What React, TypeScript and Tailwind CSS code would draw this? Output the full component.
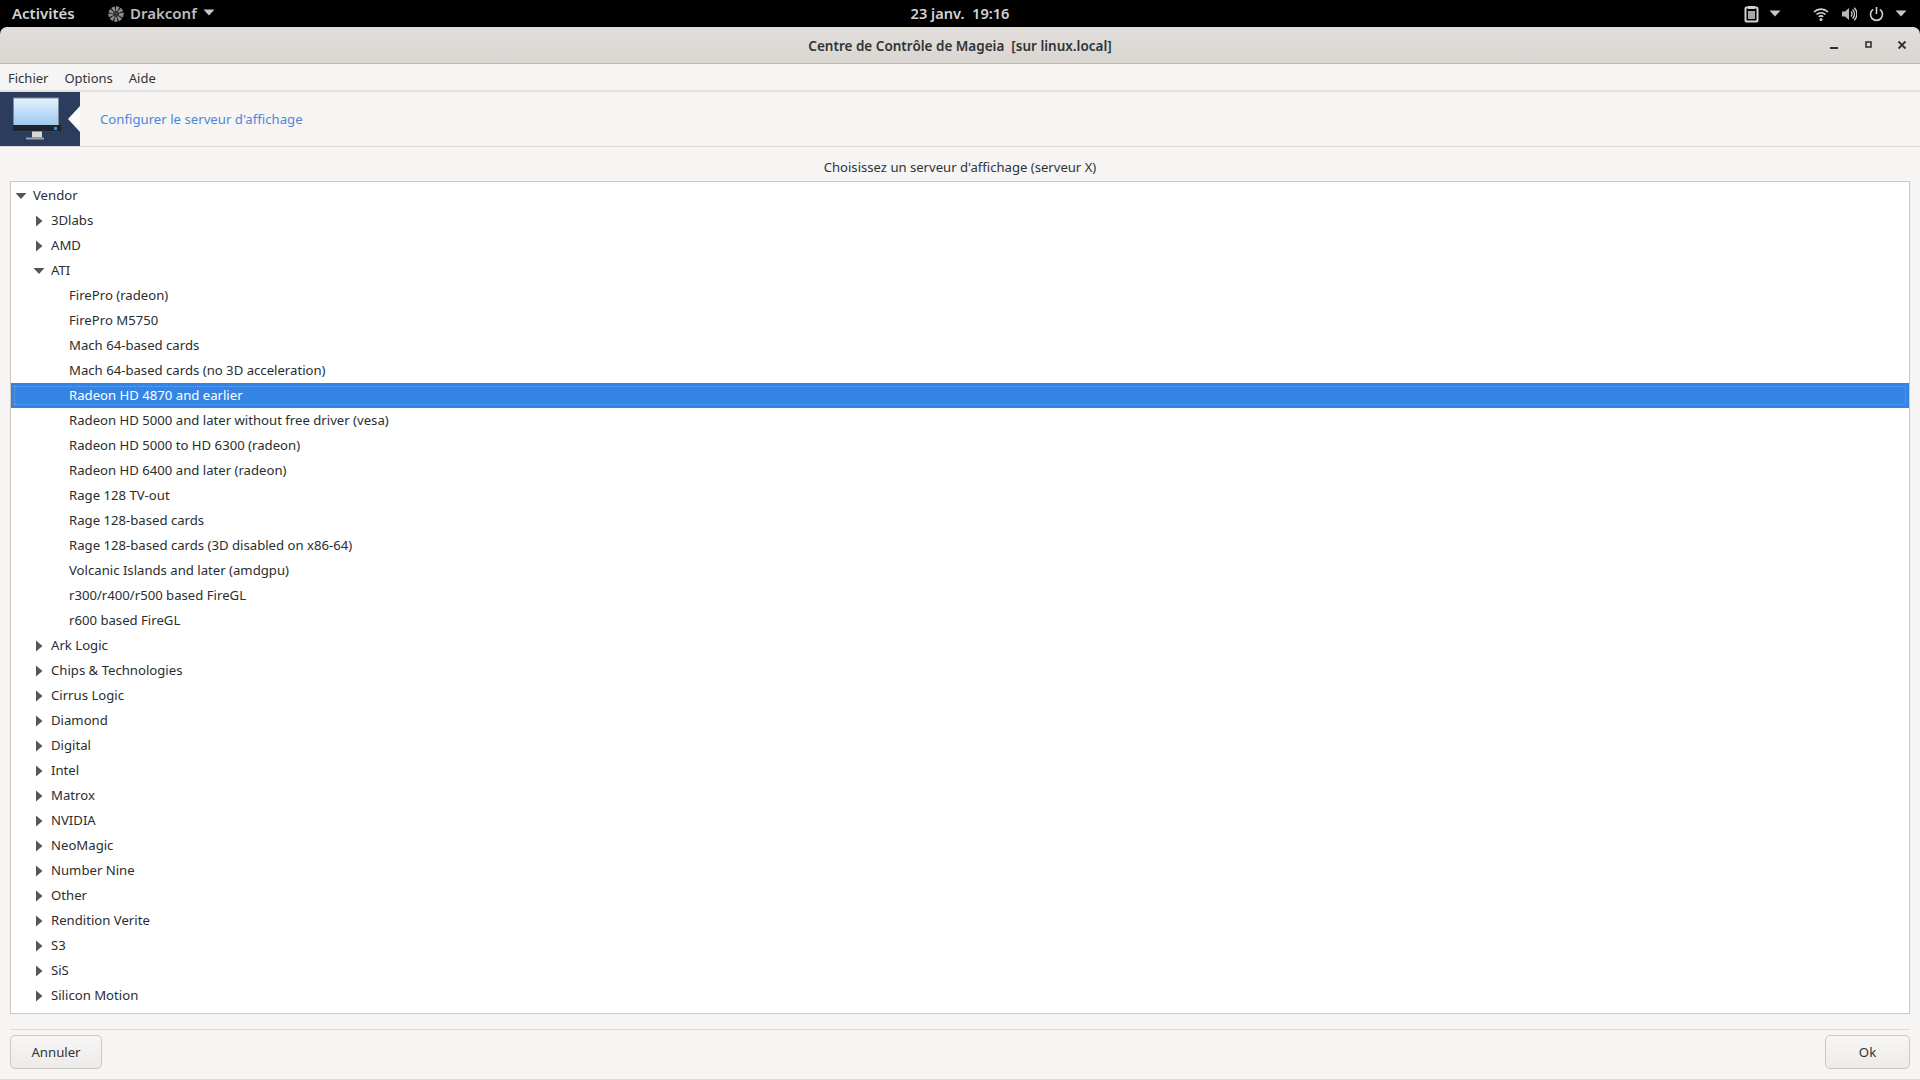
import React from "react";

type Row = { t: string; d: 0 | 1 | 2; a?: "r" | "d"; s?: boolean };

const rows: Row[] = [
  { t: "Vendor", d: 0, a: "d" },
  { t: "3Dlabs", d: 1, a: "r" },
  { t: "AMD", d: 1, a: "r" },
  { t: "ATI", d: 1, a: "d" },
  { t: "FirePro (radeon)", d: 2 },
  { t: "FirePro M5750", d: 2 },
  { t: "Mach 64-based cards", d: 2 },
  { t: "Mach 64-based cards (no 3D acceleration)", d: 2 },
  { t: "Radeon HD 4870 and earlier", d: 2, s: true },
  { t: "Radeon HD 5000 and later without free driver (vesa)", d: 2 },
  { t: "Radeon HD 5000 to HD 6300 (radeon)", d: 2 },
  { t: "Radeon HD 6400 and later (radeon)", d: 2 },
  { t: "Rage 128 TV-out", d: 2 },
  { t: "Rage 128-based cards", d: 2 },
  { t: "Rage 128-based cards (3D disabled on x86-64)", d: 2 },
  { t: "Volcanic Islands and later (amdgpu)", d: 2 },
  { t: "r300/r400/r500 based FireGL", d: 2 },
  { t: "r600 based FireGL", d: 2 },
  { t: "Ark Logic", d: 1, a: "r" },
  { t: "Chips & Technologies", d: 1, a: "r" },
  { t: "Cirrus Logic", d: 1, a: "r" },
  { t: "Diamond", d: 1, a: "r" },
  { t: "Digital", d: 1, a: "r" },
  { t: "Intel", d: 1, a: "r" },
  { t: "Matrox", d: 1, a: "r" },
  { t: "NVIDIA", d: 1, a: "r" },
  { t: "NeoMagic", d: 1, a: "r" },
  { t: "Number Nine", d: 1, a: "r" },
  { t: "Other", d: 1, a: "r" },
  { t: "Rendition Verite", d: 1, a: "r" },
  { t: "S3", d: 1, a: "r" },
  { t: "SiS", d: 1, a: "r" },
  { t: "Silicon Motion", d: 1, a: "r" },
];

function Arrow({ a }: { a: "r" | "d" }) {
  return (
    <svg width="12" height="12" viewBox="0 0 12 12" className="shrink-0">
      {a === "r" ? <path d="M3 0.5 L9.5 6 L3 11.5 Z" fill="#555753" /> : <path d="M0.5 3 L11.5 3 L6 9 Z" fill="#555753" />}
    </svg>
  );
}

function Caret({ color = "#c8c8c8" }: { color?: string }) {
  return (
    <svg width="12" height="7" viewBox="0 0 12 7" className="block">
      <path d="M0.5 0.5 L11.5 0.5 L6 6.5 Z" fill={color} />
    </svg>
  );
}

function TreeRow({ r }: { r: Row }) {
  const pad = r.d === 0 ? "pl-[4px]" : r.d === 1 ? "pl-[22px]" : "pl-[58px]";
  return (
    <div className={`h-[25px] flex items-center text-[13.15px] ${pad} ${r.s ? "bg-[#3584e4] text-white relative" : "text-[#2a2e30]"}`}>
      {r.s && <div className="absolute inset-[3px] border border-dotted border-[#6ea4ea]" />}
      {r.a && (
        <span className="w-[18px] shrink-0 flex">
          <Arrow a={r.a} />
        </span>
      )}
      <span className="whitespace-nowrap relative">{r.t}</span>
    </div>
  );
}

function TopBar() {
  return (
    <div className="h-[27px] bg-black flex items-center justify-between text-[#d3d3d3] text-[15px] font-semibold relative shrink-0">
      <div className="flex items-center">
        <span className="ml-[12px] w-[62px] whitespace-nowrap">Activités</span>
        <svg width="16" height="16" viewBox="0 0 16 16" className="ml-[34px]">
          <circle cx="8" cy="8" r="5.2" fill="none" stroke="#8a8a8a" strokeWidth="5" strokeDasharray="2.6 0.8" />
          <circle cx="8" cy="8" r="2.4" fill="#3a3a3a" />
        </svg>
        <span className="ml-[6px] w-[68px] text-[#bdbdbd] whitespace-nowrap">Drakconf</span>
        <span className="ml-[5px] flex mb-[2px]"><Caret /></span>
      </div>
      <div className="absolute inset-x-0 top-0 h-[27px] flex items-center justify-center pointer-events-none">
        <span className="text-[14.6px]">23 janv.&nbsp;&nbsp;19:16</span>
      </div>
      <div className="flex items-center mr-[13px]">
        <svg width="15" height="18" viewBox="0 0 15 18">
          <rect x="1.5" y="2.5" width="12" height="14" rx="1" fill="none" stroke="#d3d3d3" strokeWidth="2" />
          <rect x="4" y="1" width="7" height="3" fill="#d3d3d3" />
          <rect x="4" y="6" width="7" height="8" fill="#a8a8a8" />
        </svg>
        <span className="ml-[10px] flex"><Caret /></span>
        <svg width="16" height="14" viewBox="0 0 16 14" className="ml-[32px]">
          <path d="M1 5 A10 10 0 0 1 15 5" fill="none" stroke="#d3d3d3" strokeWidth="1.6" />
          <path d="M3.5 7.5 A6.5 6.5 0 0 1 12.5 7.5" fill="none" stroke="#d3d3d3" strokeWidth="1.6" />
          <path d="M5.8 9.8 A3 3 0 0 1 10.2 9.8" fill="none" stroke="#d3d3d3" strokeWidth="1.6" />
          <circle cx="8" cy="12.5" r="1.5" fill="#d3d3d3" />
        </svg>
        <svg width="16" height="14" viewBox="0 0 16 14" className="ml-[12px]">
          <path d="M1 4.5 H4 L8 1 V13 L4 9.5 H1 Z" fill="#b8b8b8" />
          <path d="M10 4.5 A3.5 3.5 0 0 1 10 9.5" fill="none" stroke="#d3d3d3" strokeWidth="1.3" />
          <path d="M11.5 2.5 A6 6 0 0 1 11.5 11.5" fill="none" stroke="#d3d3d3" strokeWidth="1.3" />
          <path d="M13.2 0.8 A8.5 8.5 0 0 1 13.2 13.2" fill="none" stroke="#d3d3d3" strokeWidth="1.3" />
        </svg>
        <svg width="15" height="16" viewBox="0 0 15 16" className="ml-[12px]">
          <path d="M4.2 3.4 A6 6 0 1 0 10.8 3.4" fill="none" stroke="#d3d3d3" strokeWidth="1.6" />
          <path d="M7.5 1 V8" fill="none" stroke="#d3d3d3" strokeWidth="1.6" />
        </svg>
        <span className="ml-[11px] flex"><Caret /></span>
      </div>
    </div>
  );
}

function TitleBar() {
  return (
    <div className="h-[37px] shrink-0 bg-black">
      <div className="h-full rounded-t-[7px] bg-gradient-to-b from-[#e1dedb] to-[#dad6d2] border-b border-[#bfb8b1] flex items-center relative">
        <div className="flex-1 text-center text-[13.5px] font-semibold text-[#2e3436] whitespace-pre pt-[2px]">Centre de Contrôle de Mageia  [sur linux.local]</div>
        <div className="absolute right-0 top-0 bottom-0 flex items-center">
          <svg width="10" height="10" viewBox="0 0 10 10" className="mr-[26px]">
            <rect x="1" y="7" width="8" height="2" fill="#2e3436" />
          </svg>
          <svg width="8" height="8" viewBox="0 0 8 8" className="mr-[24px]">
            <rect x="1" y="1" width="5" height="5" fill="none" stroke="#2e3436" strokeWidth="1.6" />
          </svg>
          <svg width="10" height="10" viewBox="0 0 10 10" className="mr-[13px]">
            <path d="M1.5 1.5 L8.5 8.5 M8.5 1.5 L1.5 8.5" stroke="#2e3436" strokeWidth="1.8" />
          </svg>
        </div>
      </div>
    </div>
  );
}

function MonitorIcon() {
  return (
    <svg width="50" height="44" viewBox="0 0 50 44" className="block">
      <defs>
        <linearGradient id="scr" x1="0" y1="0" x2="0" y2="1">
          <stop offset="0" stopColor="#e3f2fe" />
          <stop offset="1" stopColor="#9cc9ef" />
        </linearGradient>
      </defs>
      <rect x="2" y="0.5" width="46" height="34" fill="#7f8a97" />
      <rect x="3" y="1.5" width="44" height="27" fill="url(#scr)" />
      <rect x="2" y="28" width="48" height="6.5" fill="#20242b" />
      <rect x="43" y="30" width="3" height="3" fill="#1f9bdc" />
      <rect x="21" y="34.5" width="10" height="6" fill="#d5d9dc" />
      <rect x="15" y="40.5" width="18" height="2" fill="#9aa3ab" />
    </svg>
  );
}

export default function App() {
  return (
    <div className="w-[1920px] h-[1080px] overflow-hidden flex flex-col bg-[#f6f5f4] font-['Noto_Sans',sans-serif]">
      <TopBar />
      <TitleBar />
      <div className="h-[26px] shrink-0 flex items-center text-[13px] text-[#2e3436] pl-[8px] pt-[3px] gap-[16px]">
        <span>Fichier</span>
        <span>Options</span>
        <span>Aide</span>
      </div>
      <div className="h-[2px] shrink-0 bg-[#e3e0dd]" />
      <div className="h-[55px] shrink-0 flex items-center border-b border-[#dfdcd8]">
        <div className="w-[80px] h-full bg-[#2c3c5c] relative shrink-0 flex items-center pl-[11px]">
          <MonitorIcon />
          <div className="absolute right-0 top-1/2 -translate-y-1/2 w-0 h-0 border-y-[13px] border-y-transparent border-r-[12px] border-r-[#fbfbfa]" />
        </div>
        <span className="ml-[20px] pt-[2px] text-[13.2px] text-[#4f86d8]">Configurer le serveur d'affichage</span>
      </div>
      <div className="h-[34px] shrink-0 flex items-center justify-center pt-[7px] text-[13.1px] text-[#2e3436]">Choisissez un serveur d'affichage (serveur X)</div>
      <div className="mx-[10px] h-[833px] shrink-0 bg-white border border-[#cdc7c2] overflow-hidden pt-[1px]">
        {rows.map((r) => (
          <TreeRow key={r.t} r={r} />
        ))}
      </div>
      <div className="mx-[10px] mt-[15px] h-px shrink-0 bg-[#dfdcd8]" />
      <div className="mx-[10px] mt-[5px] flex justify-between shrink-0">
        <button className="w-[92px] h-[34px] pt-[2px] rounded-[5px] border border-[#cdc7c2] bg-gradient-to-b from-[#f8f7f6] to-[#edebe9] text-[13.2px] text-[#2e3436]">Annuler</button>
        <button className="w-[85px] h-[34px] pt-[2px] rounded-[5px] border border-[#cdc7c2] bg-gradient-to-b from-[#f8f7f6] to-[#edebe9] text-[13.2px] text-[#2e3436]">Ok</button>
      </div>
      <div className="mt-[10px] h-px shrink-0 bg-[#dfdcd8]" />
    </div>
  );
}
